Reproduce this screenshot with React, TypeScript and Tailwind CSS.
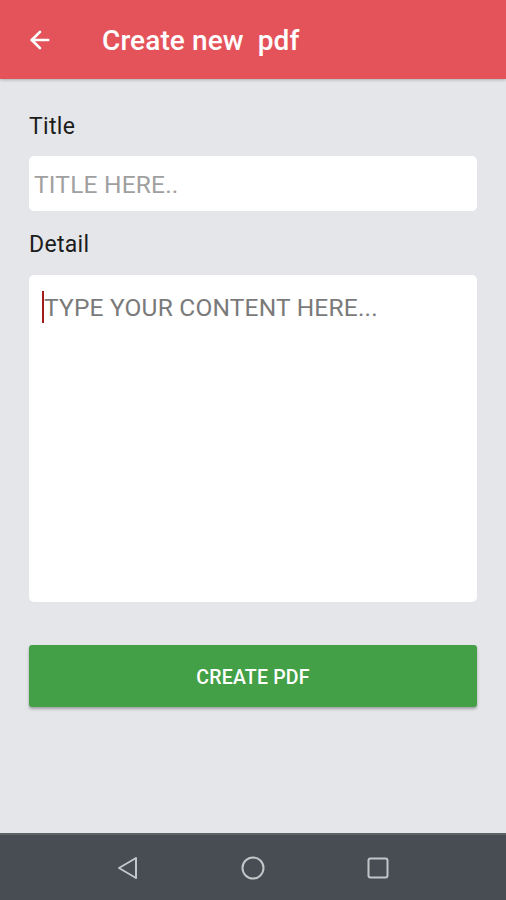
import { ArrowLeft } from 'lucide-react'

export default function App() {
  return (
    <div className="flex h-[900px] w-[506px] flex-col bg-[#e4e6e9] font-['Roboto',sans-serif]">
      <header className="flex h-[79px] shrink-0 items-center bg-[#e5535a] shadow-[0_1px_3px_rgba(0,0,0,0.25)]">
        <button className="ml-[26px] flex size-[28px] items-center justify-center text-white">
          <ArrowLeft className="size-[28px]" strokeWidth={2.3} />
        </button>
        <h1 className="ml-[48px] whitespace-pre pt-[2px] text-[28px] font-medium tracking-[0.1px] text-white">
          Create new  pdf
        </h1>
      </header>

      <main className="flex flex-1 flex-col px-[29px] pt-[34px]">
        <label className="text-[23px] leading-[28px] tracking-[0.3px] text-[#1c1c1c]">Title</label>
        <div className="mt-[15px] flex h-[55px] items-center rounded-[5px] bg-white px-[5px]">
          <span className="pt-[3px] text-[24.5px] tracking-[0.2px] text-[#a0a0a0]">TITLE HERE..</span>
        </div>

        <label className="mt-[20px] text-[23px] leading-[28px] tracking-[0.3px] text-[#1c1c1c]">Detail</label>
        <div className="mt-[16px] h-[327px] rounded-[5px] bg-white pl-[13px] pt-[15px]">
          <div className="flex items-center">
            <span className="h-[32px] w-[2px] bg-[#a31b1b]" />
            <span className="pt-[2px] text-[24.5px] leading-[32px] tracking-[0.2px] text-[#7a7a7a]">
              TYPE YOUR CONTENT HERE...
            </span>
          </div>
        </div>

        <button className="mt-[43px] flex h-[62px] items-center justify-center rounded-[3px] bg-[#43a047] pt-[3px] text-[19.5px] font-medium tracking-[0.2px] text-white shadow-[0_2px_3px_rgba(0,0,0,0.3)]">
          CREATE PDF
        </button>
      </main>

      <nav className="flex h-[67px] shrink-0 items-center justify-center gap-[102px] border-t-2 border-[#5d6266] bg-[#474d52]">
        <svg width="22" height="24" viewBox="0 0 22 24" fill="none" stroke="#c3c6c8" strokeWidth="2" strokeLinejoin="round">
          <path d="M19 2 L2 12 L19 22 Z" />
        </svg>
        <svg width="24" height="24" viewBox="0 0 24 24" fill="none" stroke="#c3c6c8" strokeWidth="2">
          <circle cx="12" cy="12" r="10.5" />
        </svg>
        <svg width="22" height="22" viewBox="0 0 22 22" fill="none" stroke="#c3c6c8" strokeWidth="2">
          <rect x="1.5" y="1.5" width="19" height="19" rx="2" />
        </svg>
      </nav>
    </div>
  )
}
